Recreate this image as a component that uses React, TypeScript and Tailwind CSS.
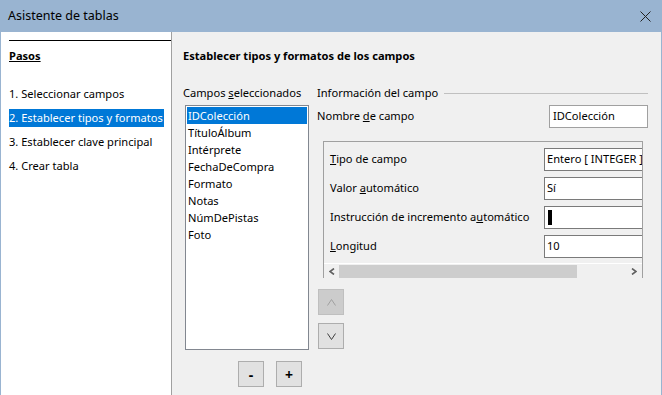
import React from "react";

const font = { fontFamily: '"Noto Sans", "Open Sans", sans-serif' };

const fields = [
  "IDColección",
  "TítuloÁlbum",
  "Intérprete",
  "FechaDeCompra",
  "Formato",
  "Notas",
  "NúmDePistas",
  "Foto",
];

const steps = [
  "1. Seleccionar campos",
  "2. Establecer tipos y formatos",
  "3. Establecer clave principal",
  "4. Crear tabla",
];

function PropRow({ label, value, cursor }: { label: React.ReactNode; value?: string; cursor?: boolean }) {
  return (
    <div className="flex items-center h-[23px]">
      <div className="w-[214px] shrink-0 text-[11.1px] text-black whitespace-nowrap">{label}</div>
      <div className="h-[23px] w-[110px] shrink-0 bg-white border border-[#7a7a7a] flex items-center pl-[2px] text-[11.1px] text-black whitespace-nowrap">
        {cursor ? <span className="inline-block w-[4px] h-[15px] bg-black ml-[1px]" /> : value}
      </div>
    </div>
  );
}

function Chevron({ dir, color }: { dir: "up" | "down" | "left" | "right"; color: string }) {
  const pts = {
    up: "0.5,6.5 4.5,0.5 8.5,6.5",
    down: "0.5,0.5 4.5,6.5 8.5,0.5",
    left: "5,0.5 1,3.5 5,6.5",
    right: "1,0.5 5,3.5 1,6.5",
  }[dir];
  const small = dir === "left" || dir === "right";
  return (
    <svg width={small ? 6 : 9} height="7" viewBox={small ? "0 0 6 7" : "0 0 9 7"}>
      <polyline points={pts} fill="none" stroke={color} strokeWidth={small ? 1.6 : 1} />
    </svg>
  );
}

export default function App() {
  return (
    <div className="w-[662px] h-[395px] flex flex-col bg-[#f0f0f0] border-x border-[#99b4d1] overflow-hidden" style={font}>
      <div className="h-[32px] shrink-0 bg-[#99b4d1] flex items-center justify-between pl-[7px] pr-[10px]">
        <span className="text-[12.5px] text-black">Asistente de tablas</span>
        <svg width="11" height="11" viewBox="0 0 11 11">
          <path d="M0.5 0.5L10.5 10.5M10.5 0.5L0.5 10.5" stroke="#222" strokeWidth="1" />
        </svg>
      </div>

      <div className="flex flex-1 min-h-0">
        <div className="w-[171px] shrink-0 bg-white border-r border-[#a0a0a0] pt-[8px] pl-[8px] pb-[2px]">
          <div className="border-t border-black pt-[7px]">
            <div className="text-[11.1px] font-bold underline leading-[16px] text-black">Pasos</div>
            <div className="mt-[21px] flex flex-col gap-[6px]">
              {steps.map((s, i) => (
                <div
                  key={s}
                  className={
                    i === 1
                      ? "h-[18px] w-[155px] bg-[#0078d7] text-white text-[11.1px] leading-[18px] whitespace-nowrap"
                      : "h-[18px] text-black text-[11.1px] leading-[18px] whitespace-nowrap"
                  }
                >
                  {s}
                </div>
              ))}
            </div>
          </div>
        </div>

        <div className="flex-1 pl-[11px] pt-[16px]">
          <div className="text-[11.1px] font-bold leading-[16px] text-black">Establecer tipos y formatos de los campos</div>

          <div className="flex mt-[21px]">
            <div className="w-[134px] shrink-0">
              <div className="text-[11.1px] leading-[16px] text-black whitespace-nowrap">
                Campos <u>s</u>eleccionados
              </div>
              <div className="mt-[4px] ml-[2px] w-[124px] h-[245px] bg-white border border-[#828790] p-[1px]">
                {fields.map((f, i) => (
                  <div
                    key={f}
                    className={
                      i === 0
                        ? "h-[17px] bg-[#0078d7] text-white text-[11.1px] leading-[17px] pl-[1px]"
                        : "h-[17px] text-black text-[11.1px] leading-[17px] pl-[1px]"
                    }
                  >
                    {f}
                  </div>
                ))}
              </div>
              <div className="flex gap-[12px] mt-[11px] ml-[55px]">
                <button className="w-[26px] h-[26px] bg-[#e1e1e1] border border-[#adadad] flex items-center justify-center text-[14px] font-bold text-black">
                  -
                </button>
                <button className="w-[26px] h-[26px] bg-[#e1e1e1] border border-[#adadad] flex items-center justify-center text-[14px] font-bold text-black">
                  +
                </button>
              </div>
            </div>

            <div className="flex-1">
              <div className="flex items-center h-[16px]">
                <span className="text-[11.1px] text-black">Información del campo</span>
                <div className="flex-1 ml-[6px] mr-[13px] border-t border-[#c0c0c0]" />
              </div>
              <div className="flex items-center mt-[4px] h-[23px]">
                <div className="w-[232px] text-[11.1px] text-black">
                  Nombre <u>d</u>e campo
                </div>
                <div className="w-[99px] h-[23px] bg-white border border-[#a0a0a0] flex items-center pl-[3px] text-[11.1px] text-black">
                  IDColección
                </div>
              </div>

              <div className="mt-[13px] ml-[6px] w-[320px] h-[137px] border-x border-t border-[#a0a0a0] overflow-hidden flex flex-col">
                <div className="flex flex-col gap-[6px] pt-[6px] pl-[6px] h-[115px]">
                  <PropRow label={<><u>T</u>ipo de campo</>} value="Entero [ INTEGER ]" />
                  <PropRow label={<>Valor <u>a</u>utomático</>} value="Sí" />
                  <PropRow label={<>Instrucción de incremento a<u>u</u>tomático</>} cursor />
                  <PropRow label={<><u>L</u>ongitud</>} value="10" />
                </div>
                <div className="mt-[6px] h-[16px] border-t border-white flex items-center">
                  <div className="w-[15px] h-[15px] flex items-center justify-center">
                    <Chevron dir="left" color="#606060" />
                  </div>
                  <div className="w-[238px] h-[14px] bg-[#cdcdcd]" />
                  <div className="flex-1" />
                  <div className="w-[15px] h-[15px] flex items-center justify-center mr-[1px]">
                    <Chevron dir="right" color="#606060" />
                  </div>
                </div>
              </div>

              <div className="flex flex-col gap-[8px] mt-[11px] ml-[1px]">
                <button className="w-[26px] h-[26px] bg-[#cccccc] border border-[#bfbfbf] flex items-center justify-center">
                  <Chevron dir="up" color="#a0a0a0" />
                </button>
                <button className="w-[26px] h-[26px] bg-[#e1e1e1] border border-[#adadad] flex items-center justify-center">
                  <Chevron dir="down" color="#404040" />
                </button>
              </div>
            </div>
          </div>
        </div>
      </div>
    </div>
  );
}
